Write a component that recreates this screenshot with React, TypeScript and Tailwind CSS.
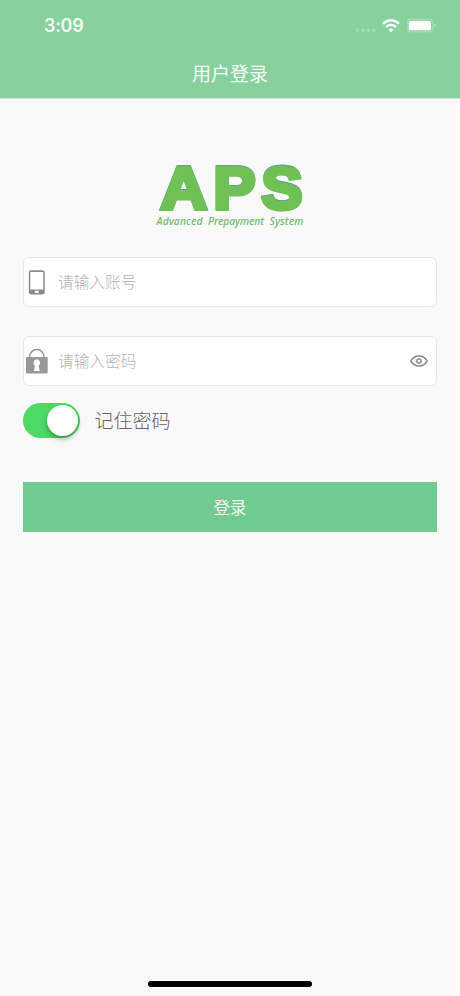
import React, { useState } from 'react';

function StatusBar() {
  return (
    <div className="flex h-[51px] items-center justify-between pl-[44px] pr-[23px]">
      <span className="font-['Inter',sans-serif] text-[18px] font-semibold leading-none tracking-[-0.3px] text-[#f4fbf2]">3:09</span>
      <div className="flex items-center">
        <svg width="22" height="18" viewBox="0 0 22 18" fill="#fff" fillOpacity="0.25">
          <rect x="0" y="11.5" width="3" height="3.5" rx="1" />
          <rect x="5.5" y="11.5" width="3" height="3.5" rx="1" />
          <rect x="11" y="11.5" width="3" height="3.5" rx="1" />
          <rect x="16.5" y="11.5" width="3" height="3.5" rx="1" />
        </svg>
        <svg className="ml-[4px]" width="18" height="18" viewBox="0 0 18 18" fill="none" stroke="#fff" strokeWidth="2.5">
          <path d="M1 6.8C5.6 2.2 12.4 2.2 17 6.8" />
          <path d="M4.1 10.1c2.9-2.8 6.9-2.8 9.8 0" />
          <path d="M6.4 12.6c1.5-1.4 3.7-1.4 5.2 0L9 15.3z" fill="#fff" stroke="none" />
        </svg>
        <svg className="ml-[7px]" width="30" height="18" viewBox="0 0 30 18">
          <rect x="0.1" y="2.2" width="25.8" height="12.6" rx="3.8" fill="none" stroke="#fff" strokeOpacity="0.35" />
          <rect x="1.7" y="3.8" width="22.4" height="9.4" rx="2.2" fill="#fff" />
          <path d="M27.4 6.8c1.6.6 1.6 2.8 0 3.4z" fill="#fff" fillOpacity="0.45" />
        </svg>
      </div>
    </div>
  );
}

function Logo() {
  return (
    <svg className="mx-auto block overflow-visible" width="156" height="72" viewBox="152 160 156 72">
      <g
        className="drop-shadow-[0.8px_-0.5px_0_#5f9fa0]"
        fontFamily="'Liberation Sans', sans-serif"
        fontWeight="700"
        fontSize="60"
        fill="#6fc055"
        stroke="#6fc055"
        strokeWidth="4"
      >
        <text x="160.5" y="209" textLength="46.5" lengthAdjust="spacingAndGlyphs">A</text>
        <text x="213.5" y="209" textLength="42" lengthAdjust="spacingAndGlyphs">P</text>
        <text x="261.5" y="209" textLength="41" lengthAdjust="spacingAndGlyphs">S</text>
      </g>
      <g fill="#79bb7a" fontFamily="'Open Sans', sans-serif" fontSize="10.3" fontStyle="italic" fontWeight="600">
        <text x="156.5" y="224.9" textLength="46">Advanced</text>
        <text x="208" y="224.9" textLength="56">Prepayment</text>
        <text x="269.5" y="224.9" textLength="34">System</text>
      </g>
    </svg>
  );
}

function PhoneIcon() {
  return (
    <svg width="26" height="26" viewBox="0 0 26 26">
      <rect x="4.8" y="1.2" width="16" height="24.2" rx="2.6" fill="#8b8b8b" />
      <rect x="6.3" y="2.9" width="13" height="17.6" rx="0.6" fill="#fff" />
      <rect x="10.8" y="21.8" width="4" height="2.2" rx="0.8" fill="#fff" />
    </svg>
  );
}

function LockIcon() {
  return (
    <svg width="26" height="26" viewBox="0 0 26 26">
      <path d="M5.5 9.5C5.5 4.8 8.8 1.5 12.8 1.5s7.3 3.3 7.3 8" fill="none" stroke="#999" strokeWidth="1.6" />
      <rect x="2" y="9" width="21.7" height="16.4" rx="1.2" fill="#999" />
      <path d="M12.8 11.3a3.5 3.5 0 0 1 1.9 6.3l1 5.4h-5.8l1-5.4a3.5 3.5 0 0 1 1.9-6.3z" fill="#fff" />
    </svg>
  );
}

function EyeIcon() {
  return (
    <svg width="18" height="12" viewBox="0 0 18 12" fill="none" stroke="#8c8c8c" strokeWidth="1.5">
      <path d="M.8 6C4.7-.8 13.3-.8 17.2 6 13.3 12.6 4.7 12.6.8 6z" />
      <circle cx="9" cy="6" r="2.1" />
    </svg>
  );
}

const fieldClass = 'flex h-[50px] items-center rounded-[6px] border border-[#e7e7e7] bg-white';
const inputClass =
  'ml-[8px] min-w-0 flex-1 bg-transparent text-[15.7px] font-light text-[#333] outline-none placeholder:text-[#b4b4b4] placeholder:opacity-100';

export default function App() {
  const [remember, setRemember] = useState(true);
  const [visible, setVisible] = useState(false);

  return (
    <div className="flex h-screen min-h-[996px] flex-col bg-[#f9f9f9] font-['Noto_Sans_CJK_SC',sans-serif]">
      <header className="h-[98px] shrink-0 bg-[#87d19d] text-[#f8fdf6]">
        <StatusBar />
        <h1 className="text-center text-[19px] font-normal leading-[44px]">用户登录</h1>
      </header>

      <main className="flex-1 border-t border-[#d9dedb] px-[23px] pt-[61px]">
        <Logo />

        <div className={`mt-[25px] ${fieldClass}`}>
          <PhoneIcon />
          <input className={inputClass} type="text" placeholder="请输入账号" />
        </div>

        <div className={`mt-[29px] ${fieldClass}`}>
          <LockIcon />
          <input className={inputClass} type={visible ? 'text' : 'password'} placeholder="请输入密码" />
          <button type="button" className="mr-[8px]" onClick={() => setVisible(!visible)}>
            <EyeIcon />
          </button>
        </div>

        <div className="mt-[17px] flex h-[35px] items-center">
          <button
            type="button"
            role="switch"
            aria-checked={remember}
            onClick={() => setRemember(!remember)}
            className={`flex h-[35px] w-[57px] items-center rounded-full px-[2px] ${remember ? 'justify-end bg-[#4cd964]' : 'justify-start bg-[#ddd]'}`}
          >
            <span className="size-[31px] rounded-full bg-white shadow-[0_3px_5px_rgba(0,0,0,0.3)]" />
          </button>
          <span className="-mt-[3px] ml-[14.5px] text-[19px] font-light leading-none text-[#666]">记住密码</span>
        </div>

        <button type="button" className="mt-[44.4px] block h-[50px] w-full bg-[#71ca90] text-[16.5px] font-normal text-[#f1fbf2]">
          登录
        </button>
      </main>

      <div className="mx-auto mb-[9px] h-[6px] w-[164px] shrink-0 rounded-full bg-black" />
    </div>
  );
}
